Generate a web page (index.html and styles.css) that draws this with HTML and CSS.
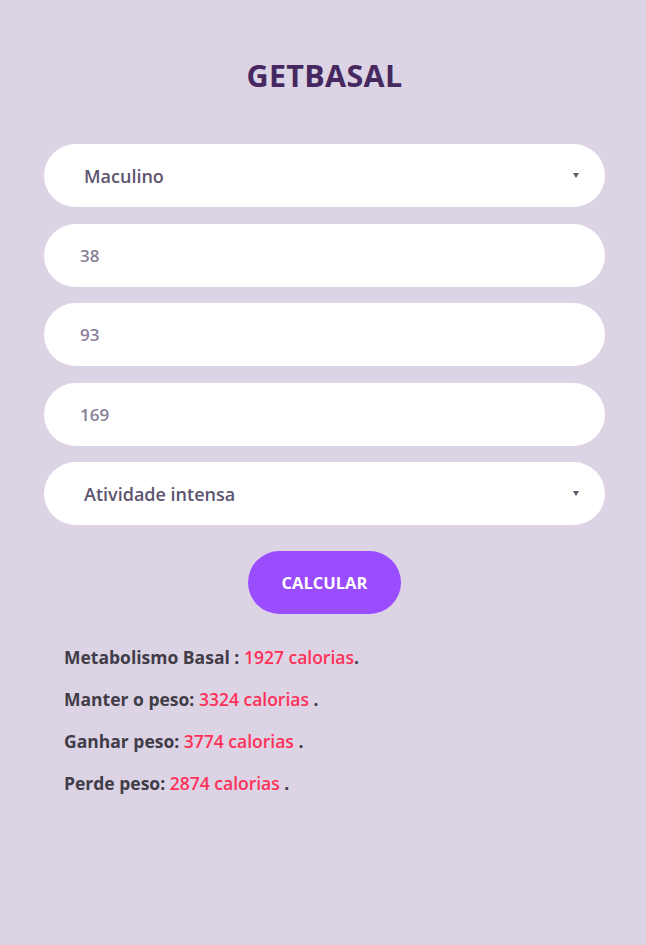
FILE: index.html
```html
<!DOCTYPE html>
<html lang="pt">
<head>
<meta charset="utf-8">
<title>GetBasal</title>
<link rel="stylesheet" href="styles.css">
</head>
<body>
<main class="app">
  <h1 class="title">GETBASAL</h1>
  <form class="form">
    <div class="select-wrap">
      <select class="field field-select">
        <option>Maculino</option>
        <option>Feminino</option>
      </select>
    </div>
    <input class="field field-input" type="text" value="38">
    <input class="field field-input" type="text" value="93">
    <input class="field field-input" type="text" value="169">
    <div class="select-wrap">
      <select class="field field-select">
        <option>Atividade intensa</option>
      </select>
    </div>
    <button class="btn" type="button">CALCULAR</button>
  </form>
  <section class="results">
    <p class="line">Metabolismo Basal : <span class="val">1927 calorias</span>.</p>
    <p class="line">Manter o peso: <span class="val">3324 calorias</span> .</p>
    <p class="line">Ganhar peso: <span class="val">3774 calorias</span> .</p>
    <p class="line">Perde peso: <span class="val">2874 calorias</span> .</p>
  </section>
</main>
</body>
</html>
```
FILE: styles.css
```css
* { box-sizing: border-box; }
html, body {
  margin: 0;
  padding: 0;
  background: #dcd3e5;
  font-family: "Open Sans", "Noto Sans", sans-serif;
}
.app {
  padding: 55px 41px 0 44px;
  display: flex;
  flex-direction: column;
}
.title {
  margin: 0;
  text-align: center;
  font-size: 30.5px;
  font-weight: 700;
  color: #44285f;
  line-height: 40px;
  letter-spacing: 0.3px;
}
.form {
  margin-top: 49px;
  display: flex;
  flex-direction: column;
  gap: 16.5px;
}
.field {
  width: 100%;
  height: 63px;
  border: none;
  border-radius: 32px;
  background: #fff;
  font-family: inherit;
  font-weight: 600;
  font-size: 17px;
  outline: none;
}
.field-input {
  padding-left: 36px;
  color: #8a7f99;
}
.select-wrap {
  position: relative;
}
.select-wrap::after {
  content: "";
  position: absolute;
  right: 26px;
  top: 29px;
  border-left: 3px solid transparent;
  border-right: 3px solid transparent;
  border-top: 5px solid #5d566a;
  pointer-events: none;
}
.field-select {
  -webkit-appearance: none;
  appearance: none;
  padding-left: 40px;
  font-size: 18px;
  color: #5d5470;
  display: block;
}
.btn {
  align-self: center;
  margin-top: 9.5px;
  width: 153px;
  height: 63px;
  border: none;
  border-radius: 32px;
  background: #9a4cff;
  color: #fff;
  font-family: inherit;
  font-weight: 700;
  font-size: 16.5px;
}
.results {
  padding: 22px 20px 0;
  display: flex;
  flex-direction: column;
}
.line {
  margin: 0;
  line-height: 42px;
  font-size: 17.5px;
  font-weight: 700;
  color: #413d48;
}
.val {
  color: #ff3158;
  font-weight: 600;
}
```
